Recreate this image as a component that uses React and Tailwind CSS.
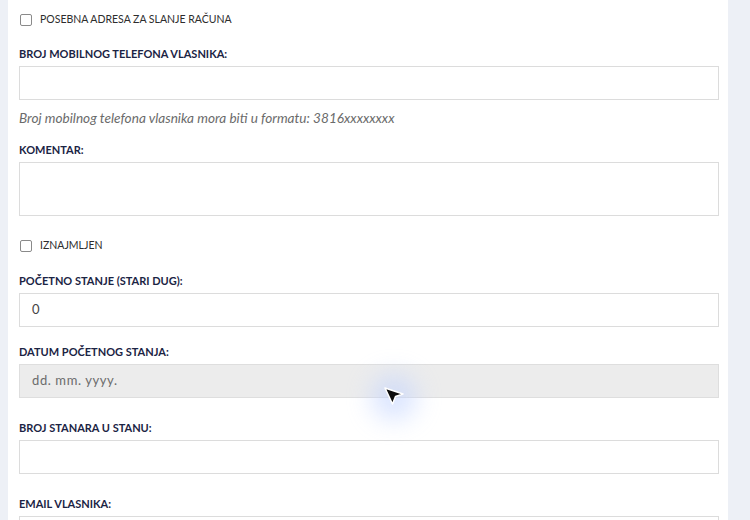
import React from "react";

const font = { fontFamily: "Lato, 'Noto Sans', sans-serif" };

// etiketa iznad polja
const Label = ({ children, className = "" }) => (
  <div className={`h-[14px] leading-[14px] text-[11px] font-bold text-[#1b2444] mb-[5px] ${className}`}>
    {children}
  </div>
);

const Checkbox = ({ label, className = "" }) => (
  <label className={`flex items-center h-[13px] ${className}`}>
    <span className="ml-[1px] w-[12px] h-[12px] rounded-[2px] border border-[#8a8a8a] bg-white" />
    <span className="ml-[8px] text-[10.5px] text-[#2d2d2d] leading-[13px]">{label}</span>
  </label>
);

const Field = ({ h = "h-[34px]", children, className = "" }) => (
  <div className={`box-border w-full ${h} border border-[#dcdcdc] flex items-center px-3 ${className}`}>
    {children}
  </div>
);

export default function App() {
  return (
    <div className="relative flex w-[750px] h-[520px] overflow-hidden bg-[#edf0f6]" style={font}>
      <div className="ml-[8px] w-[720px] h-full bg-white pl-[11px] pr-[9px] pt-[13px]">
        <Checkbox label="POSEBNA ADRESA ZA SLANJE RAČUNA" />

        <Label className="mt-[21px]">BROJ MOBILNOG TELEFONA VLASNIKA:</Label>
        <Field />
        <div className="mt-[9px] h-[18px] leading-[18px] text-[13.6px] italic text-[#6b6b6b]">
          Broj mobilnog telefona vlasnika mora biti u formatu: 3816xxxxxxxx
        </div>

        <Label className="mt-[16px]">KOMENTAR:</Label>
        <Field h="h-[54px]" />

        <Checkbox label="IZNAJMLJEN" className="mt-[23px]" />

        <Label className="mt-[22px]">POČETNO STANJE (STARI DUG):</Label>
        <Field>
          <span className="text-[13px] text-[#444]">0</span>
        </Field>

        <Label className="mt-[18px]">DATUM POČETNOG STANJA:</Label>
        <Field className="bg-[#ececec] border-[#dedede]">
          <span className="text-[13px] text-[#6b6b6b] tracking-[0.6px]">dd. mm. yyyy.</span>
        </Field>

        <Label className="mt-[23px]">BROJ STANARA U STANU:</Label>
        <Field />

        <Label className="mt-[23px]">EMAIL VLASNIKA:</Label>
        <Field />
      </div>

      {/* kursor misa */}
      <div className="absolute left-[371px] top-[374px] w-[46px] h-[46px] rounded-full bg-[#c3d4ff] opacity-60 blur-md" />
      <svg className="absolute left-[383px] top-[386px]" width="22" height="20" viewBox="0 0 22 20">
        <path d="M2 2 L20 8 L12.5 10.5 L9.5 18 Z" fill="#0d0d0d" stroke="#fff" strokeWidth="1.5" strokeLinejoin="round" />
      </svg>
    </div>
  );
}
